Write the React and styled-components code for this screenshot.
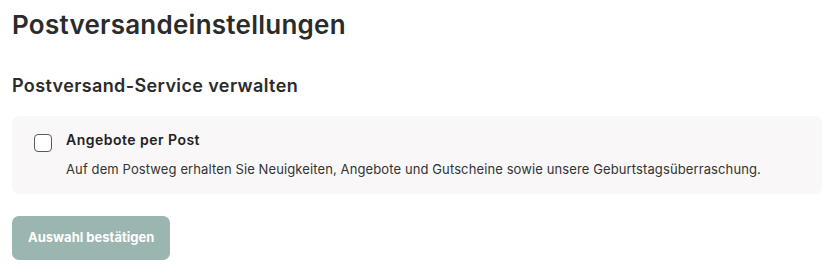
import React, { useState } from "react";
import styled, { createGlobalStyle } from "styled-components";

const GlobalStyle = createGlobalStyle`
  html, body {
    margin: 0;
    padding: 0;
    background: #ffffff;
  }
  body {
    font-family: Inter, "Open Sans", sans-serif;
    color: #2b2b2b;
  }
`;

const Page = styled.div`
  display: flex;
  flex-direction: column;
  align-items: flex-start;
  padding: 9px 8px 0 12px;
`;

const Title = styled.h1`
  margin: 0;
  font-size: 26px;
  line-height: 32px;
  font-weight: 600;
  letter-spacing: 0.25px;
  color: #2b2b2b;
`;

const SectionTitle = styled.h2`
  margin: 33px 0 0;
  font-size: 18px;
  line-height: 24px;
  font-weight: 600;
  letter-spacing: 0.38px;
  color: #2b2b2b;
`;

const OptionCard = styled.label`
  margin-top: 18px;
  align-self: stretch;
  display: flex;
  gap: 14px;
  padding: 14px 22px 15px;
  background: #f9f7f8;
  border-radius: 7px;
  cursor: pointer;
`;

const Box = styled.span`
  flex: none;
  margin-top: 4px;
  width: 18px;
  height: 18px;
  box-sizing: border-box;
  border: 1.5px solid #5a5a5a;
  border-radius: 4px;
  background: ${(p) => (p.$checked ? "#9bb5b0" : "#ffffff")};
  display: flex;
  align-items: center;
  justify-content: center;
`;

const HiddenInput = styled.input`
  display: none;
`;

const OptionText = styled.div`
  display: flex;
  flex-direction: column;
  gap: 9px;
`;

const OptionTitle = styled.span`
  font-size: 14px;
  line-height: 20px;
  font-weight: 600;
  letter-spacing: 0.48px;
  color: #222222;
`;

const OptionDescription = styled.span`
  font-size: 13px;
  line-height: 20px;
  font-weight: 400;
  letter-spacing: 0.11px;
  color: #333333;
`;

const ConfirmButton = styled.button`
  margin-top: 22px;
  height: 44px;
  padding: 0 16px;
  border: none;
  border-radius: 7px;
  background: #9bb5b0;
  color: #ffffff;
  font-family: Inter, "Open Sans", sans-serif;
  font-size: 13px;
  font-weight: 700;
  letter-spacing: 0;
  cursor: ${(p) => (p.disabled ? "default" : "pointer")};
  padding-bottom: 2px;
`;

export default function App() {
  const [checked, setChecked] = useState(false);

  return (
    <>
      <GlobalStyle />
      <Page>
        <Title>Postversandeinstellungen</Title>
        <SectionTitle>Postversand-Service verwalten</SectionTitle>
        <OptionCard>
          <HiddenInput
            type="checkbox"
            checked={checked}
            onChange={(e) => setChecked(e.target.checked)}
          />
          <Box $checked={checked}>
            {checked && (
              <svg width="12" height="12" viewBox="0 0 12 12">
                <path d="M2 6.2l2.6 2.6L10 3.4" fill="none" stroke="#fff" strokeWidth="1.8" />
              </svg>
            )}
          </Box>
          <OptionText>
            <OptionTitle>Angebote per Post</OptionTitle>
            <OptionDescription>
              Auf dem Postweg erhalten Sie Neuigkeiten, Angebote und Gutscheine sowie unsere Geburtstagsüberraschung.
            </OptionDescription>
          </OptionText>
        </OptionCard>
        <ConfirmButton disabled={!checked}>Auswahl bestätigen</ConfirmButton>
      </Page>
    </>
  );
}
